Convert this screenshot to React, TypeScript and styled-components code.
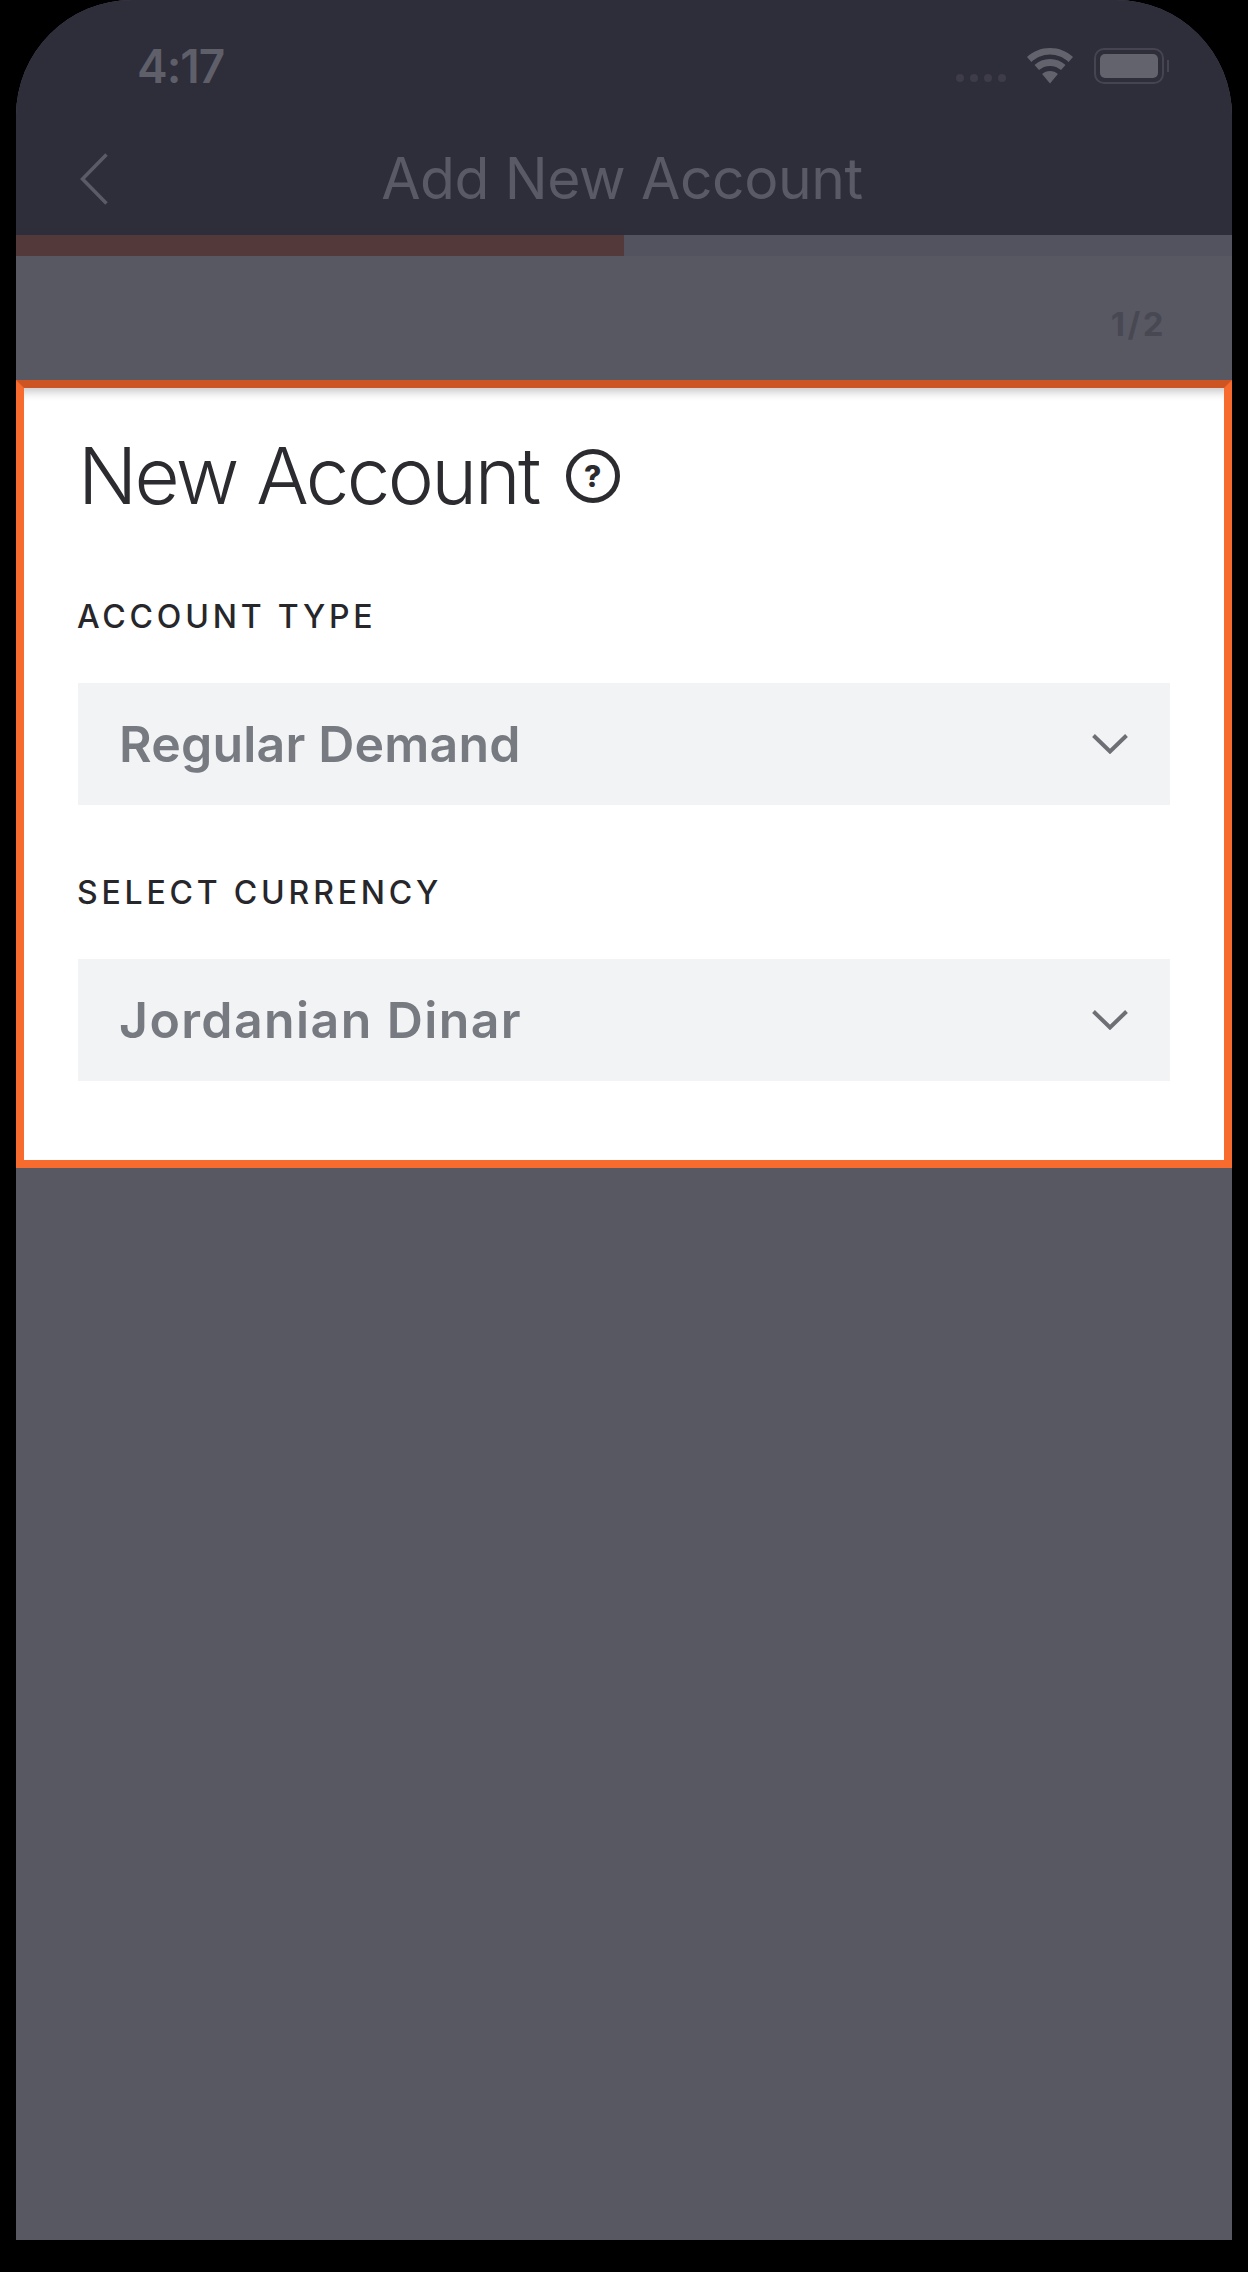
import React from "react";
import styled, { createGlobalStyle } from "styled-components";

const Global = createGlobalStyle`
  html, body { margin: 0; padding: 0; background: #000; }
  * { box-sizing: border-box; }
`;

const Screen = styled.div`
  width: 1216px;
  height: 2240px;
  margin-left: 16px;
  background: #585863;
  border-radius: 116px 116px 0 0;
  overflow: hidden;
  display: flex;
  flex-direction: column;
  font-family: "Inter", "Liberation Sans", sans-serif;
`;
const Header = styled.header`
  height: 235px;
  background: #2e2d3a;
  display: flex;
  flex-direction: column;
`;
const StatusBar = styled.div`
  height: 132px;
  padding: 43px 63px 0 121px;
  display: flex;
  align-items: flex-start;
  justify-content: space-between;
`;
const Clock = styled.span`
  font-weight: 600;
  font-size: 46px;
  line-height: 46px;
  letter-spacing: -1px;
  color: #5f5f6a;
`;
const StatusIcons = styled.div`
  display: flex;
  align-items: center;
  height: 40px;
  margin-top: 3px;
  gap: 20px;
`;
const Signal = styled.div`
  display: flex;
  gap: 6px;
  margin-top: 24px;
`;
const SignalDot = styled.span`
  width: 8px;
  height: 8px;
  border-radius: 50%;
  background: #3d3c48;
`;
const Battery = styled.div`
  display: flex;
  align-items: center;
  gap: 3px;
`;
const BatteryShell = styled.div`
  width: 70px;
  height: 36px;
  padding: 4px;
  border: 2px solid #45444f;
  border-radius: 10px;
`;
const BatteryFill = styled.div`
  width: 100%;
  height: 100%;
  border-radius: 5px;
  background: #63636e;
`;
const BatteryTip = styled.div`
  width: 2px;
  height: 12px;
  background: #45444f;
`;
const Nav = styled.nav`
  flex: 1;
  display: grid;
  grid-template-columns: 1fr auto 1fr;
  align-items: center;
  padding: 0 68px 9px 64px;
`;
const NavTitle = styled.h1`
  margin: 0;
  font-weight: 400;
  font-size: 57px;
  line-height: 64px;
  letter-spacing: -0.4px;
  color: #5a5a66;
`;
const Progress = styled.div`
  height: 21px;
  background: #53525f;
`;
const ProgressFill = styled.div`
  height: 100%;
  background: #53393a;
`;
const StepRow = styled.div`
  height: 124px;
  padding: 12px 66px 0 0;
  display: flex;
  align-items: center;
  justify-content: flex-end;
`;
const StepText = styled.span`
  font-weight: 700;
  font-size: 33px;
  letter-spacing: 2.5px;
  color: #484853;
`;
const Card = styled.section`
  height: 788px;
  background: #fff;
  border: 8px solid #f76b2f;
  border-top-color: #cc5523;
  padding: 0 54px;
  box-shadow: inset 0 12px 10px -8px rgba(0, 0, 0, 0.22);
`;
const TitleRow = styled.div`
  display: flex;
  align-items: center;
  gap: 27px;
  height: 100px;
  margin-top: 38px;
`;
const Title = styled.h2`
  margin: 0;
  font-weight: 300;
  font-size: 78px;
  line-height: 100px;
  letter-spacing: -2.6px;
  color: #2c2c30;
`;
const HelpBadge = styled.span`
  width: 54px;
  height: 54px;
  flex: none;
  border: 5px solid #2c2c30;
  border-radius: 50%;
  display: flex;
  align-items: center;
  justify-content: center;
  font-weight: 800;
  font-size: 30px;
  color: #2c2c30;
`;
const Fields = styled.div`
  margin-top: 71px;
  display: flex;
  flex-direction: column;
  gap: 68px;
`;
const Field = styled.div``;
const Label = styled.div`
  margin-left: -1px;
  font-weight: 500;
  font-size: 32px;
  line-height: 40px;
  letter-spacing: 3.8px;
  color: #27272b;
  margin-bottom: 46px;
`;
const Select = styled.div`
  height: 122px;
  background: #f2f3f5;
  padding: 0 42px;
  display: flex;
  align-items: center;
  justify-content: space-between;
`;
const SelectValue = styled.span<{ $tracking: number }>`
  margin-left: -1px;
  font-weight: 600;
  font-size: 50px;
  line-height: 60px;
  letter-spacing: ${(p) => p.$tracking}px;
  color: #777a80;
`;

const Wifi = () => (
  <svg width="48" height="36" viewBox="0 0 48 36" fill="#63636e">
    <path d="M24 0C15 0 7 3.4 1 9l4.400 5C10.400 9.400 17 6.500 24 6.500S37.600 9.400 42.600 14L47 9C41 3.400 33 0 24 0Z" />
    <path d="M24 11c-6 0-11.400 2.300-15.500 6l4.500 5c2.900-2.500 6.700-4.100 11-4.100s8.100 1.600 11 4.100l4.500-5C35.400 13.300 30 11 24 11Z" />
    <path d="M24 23c-3 0-5.800 1.100-7.900 3L24 35.500 31.900 26C29.800 24.100 27 23 24 23Z" />
  </svg>
);
const Back = () => (
  <svg width="28" height="52" viewBox="0 0 28 52" fill="none" stroke="#5b5b67" strokeWidth="3.5">
    <path d="M26.500 1.500 2.500 26l24 24.500" />
  </svg>
);
const Chevron = () => (
  <svg width="36" height="20" viewBox="0 0 36 20" fill="none" stroke="#6d6f75" strokeWidth="4">
    <path d="M1.500 1.500 18 17.500 34.500 1.500" />
  </svg>
);

const fields = [
  { label: "ACCOUNT TYPE", value: "Regular Demand", tracking: 0.2 },
  { label: "SELECT CURRENCY", value: "Jordanian Dinar", tracking: 1.4 },
];

export default function App() {
  return (
    <>
      <Global />
      <Screen>
        <Header>
          <StatusBar>
            <Clock>4:17</Clock>
            <StatusIcons>
              <Signal>
                {[0, 1, 2, 3].map((i) => (
                  <SignalDot key={i} />
                ))}
              </Signal>
              <Wifi />
              <Battery>
                <BatteryShell>
                  <BatteryFill />
                </BatteryShell>
                <BatteryTip />
              </Battery>
            </StatusIcons>
          </StatusBar>
          <Nav>
            <Back />
            <NavTitle>Add New Account</NavTitle>
          </Nav>
        </Header>
        <Progress>
          <ProgressFill style={{ width: "50%" }} />
        </Progress>
        <StepRow>
          <StepText>1/2</StepText>
        </StepRow>
        <Card>
          <TitleRow>
            <Title>New Account</Title>
            <HelpBadge>?</HelpBadge>
          </TitleRow>
          <Fields>
            {fields.map((f) => (
              <Field key={f.label}>
                <Label>{f.label}</Label>
                <Select>
                  <SelectValue $tracking={f.tracking}>{f.value}</SelectValue>
                  <Chevron />
                </Select>
              </Field>
            ))}
          </Fields>
        </Card>
      </Screen>
    </>
  );
}
